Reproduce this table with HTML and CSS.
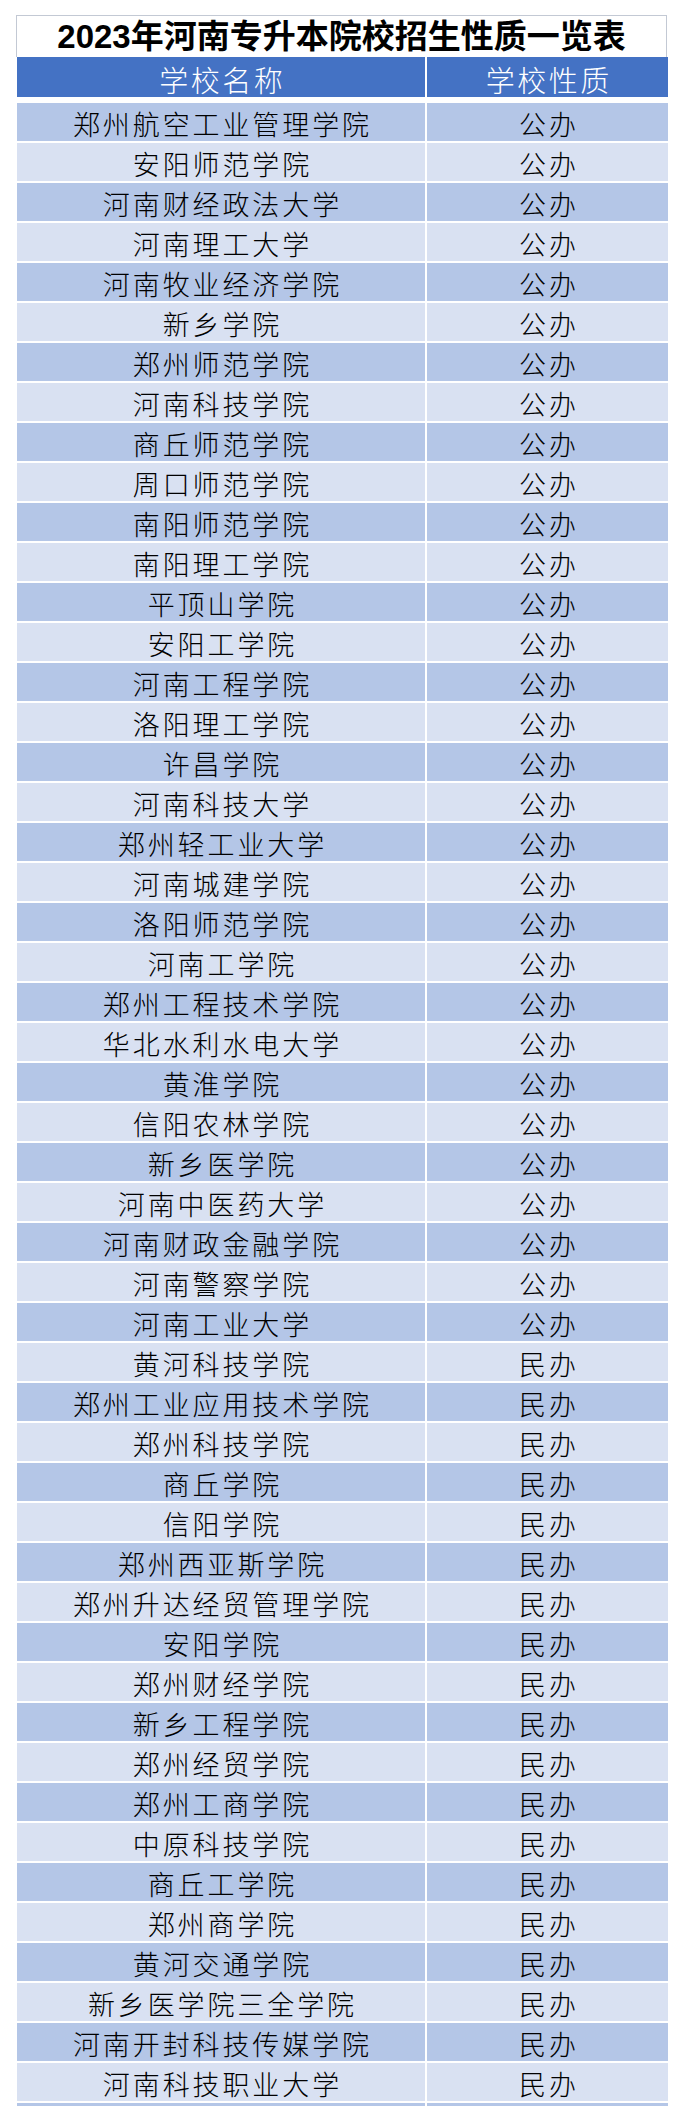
FILE: index.html
```html
<!DOCTYPE html>
<html lang="zh-CN">
<head>
<meta charset="utf-8">
<title>2023年河南专升本院校招生性质一览表</title>
<link rel="stylesheet" href="styles.css">
</head>
<body>
<div class="sheet">
  <div class="title">2023年河南专升本院校招生性质一览表</div>
  <div class="row head"><div class="cell">学校名称</div><div class="cell">学校性质</div></div>
  <div class="rows">
    <div class="row odd"><div class="cell">郑州航空工业管理学院</div><div class="cell">公办</div></div>
    <div class="row even"><div class="cell">安阳师范学院</div><div class="cell">公办</div></div>
    <div class="row odd"><div class="cell">河南财经政法大学</div><div class="cell">公办</div></div>
    <div class="row even"><div class="cell">河南理工大学</div><div class="cell">公办</div></div>
    <div class="row odd"><div class="cell">河南牧业经济学院</div><div class="cell">公办</div></div>
    <div class="row even"><div class="cell">新乡学院</div><div class="cell">公办</div></div>
    <div class="row odd"><div class="cell">郑州师范学院</div><div class="cell">公办</div></div>
    <div class="row even"><div class="cell">河南科技学院</div><div class="cell">公办</div></div>
    <div class="row odd"><div class="cell">商丘师范学院</div><div class="cell">公办</div></div>
    <div class="row even"><div class="cell">周口师范学院</div><div class="cell">公办</div></div>
    <div class="row odd"><div class="cell">南阳师范学院</div><div class="cell">公办</div></div>
    <div class="row even"><div class="cell">南阳理工学院</div><div class="cell">公办</div></div>
    <div class="row odd"><div class="cell">平顶山学院</div><div class="cell">公办</div></div>
    <div class="row even"><div class="cell">安阳工学院</div><div class="cell">公办</div></div>
    <div class="row odd"><div class="cell">河南工程学院</div><div class="cell">公办</div></div>
    <div class="row even"><div class="cell">洛阳理工学院</div><div class="cell">公办</div></div>
    <div class="row odd"><div class="cell">许昌学院</div><div class="cell">公办</div></div>
    <div class="row even"><div class="cell">河南科技大学</div><div class="cell">公办</div></div>
    <div class="row odd"><div class="cell">郑州轻工业大学</div><div class="cell">公办</div></div>
    <div class="row even"><div class="cell">河南城建学院</div><div class="cell">公办</div></div>
    <div class="row odd"><div class="cell">洛阳师范学院</div><div class="cell">公办</div></div>
    <div class="row even"><div class="cell">河南工学院</div><div class="cell">公办</div></div>
    <div class="row odd"><div class="cell">郑州工程技术学院</div><div class="cell">公办</div></div>
    <div class="row even"><div class="cell">华北水利水电大学</div><div class="cell">公办</div></div>
    <div class="row odd"><div class="cell">黄淮学院</div><div class="cell">公办</div></div>
    <div class="row even"><div class="cell">信阳农林学院</div><div class="cell">公办</div></div>
    <div class="row odd"><div class="cell">新乡医学院</div><div class="cell">公办</div></div>
    <div class="row even"><div class="cell">河南中医药大学</div><div class="cell">公办</div></div>
    <div class="row odd"><div class="cell">河南财政金融学院</div><div class="cell">公办</div></div>
    <div class="row even"><div class="cell">河南警察学院</div><div class="cell">公办</div></div>
    <div class="row odd"><div class="cell">河南工业大学</div><div class="cell">公办</div></div>
    <div class="row even"><div class="cell">黄河科技学院</div><div class="cell">民办</div></div>
    <div class="row odd"><div class="cell">郑州工业应用技术学院</div><div class="cell">民办</div></div>
    <div class="row even"><div class="cell">郑州科技学院</div><div class="cell">民办</div></div>
    <div class="row odd"><div class="cell">商丘学院</div><div class="cell">民办</div></div>
    <div class="row even"><div class="cell">信阳学院</div><div class="cell">民办</div></div>
    <div class="row odd"><div class="cell">郑州西亚斯学院</div><div class="cell">民办</div></div>
    <div class="row even"><div class="cell">郑州升达经贸管理学院</div><div class="cell">民办</div></div>
    <div class="row odd"><div class="cell">安阳学院</div><div class="cell">民办</div></div>
    <div class="row even"><div class="cell">郑州财经学院</div><div class="cell">民办</div></div>
    <div class="row odd"><div class="cell">新乡工程学院</div><div class="cell">民办</div></div>
    <div class="row even"><div class="cell">郑州经贸学院</div><div class="cell">民办</div></div>
    <div class="row odd"><div class="cell">郑州工商学院</div><div class="cell">民办</div></div>
    <div class="row even"><div class="cell">中原科技学院</div><div class="cell">民办</div></div>
    <div class="row odd"><div class="cell">商丘工学院</div><div class="cell">民办</div></div>
    <div class="row even"><div class="cell">郑州商学院</div><div class="cell">民办</div></div>
    <div class="row odd"><div class="cell">黄河交通学院</div><div class="cell">民办</div></div>
    <div class="row even"><div class="cell">新乡医学院三全学院</div><div class="cell">民办</div></div>
    <div class="row odd"><div class="cell">河南开封科技传媒学院</div><div class="cell">民办</div></div>
    <div class="row even"><div class="cell">河南科技职业大学</div><div class="cell">民办</div></div>
    <div class="row odd"><div class="cell"></div><div class="cell"></div></div>
  </div>
</div>
</body>
</html>
```

FILE: styles.css
```css
html, body {
  margin: 0;
  padding: 0;
  background: #ffffff;
}

body {
  font-family: "Noto Sans CJK SC", "Liberation Sans", sans-serif;
  color: #000000;
}

.sheet {
  width: 651px;
  margin: 15px 0 0 17px;
}

.title {
  box-sizing: border-box;
  width: 651px;
  height: 42px;
  margin-left: -1px;
  border: 1px solid #c3c9d4;
  border-bottom: none;
  font-family: "Liberation Sans", "Noto Sans CJK SC", sans-serif;
  font-weight: 700;
  font-size: 33px;
  line-height: 41px;
  text-align: center;
  color: #000000;
  white-space: nowrap;
}

.row {
  display: grid;
  grid-template-columns: 408px 241px;
  column-gap: 2px;
}

.rows {
  display: flex;
  flex-direction: column;
  row-gap: 2px;
}

.cell {
  box-sizing: border-box;
  height: 38px;
  padding-top: 3px;
  line-height: 35px;
  text-align: center;
  white-space: nowrap;
  font-size: 27px;
  font-weight: 300;
  letter-spacing: 2.9px;
  text-indent: 2.9px;
}

.head {
  margin-bottom: 6px;
}

.head .cell {
  height: 40px;
  padding-top: 4px;
  line-height: 36px;
  background: #4472c4;
  color: #ffffff;
  font-size: 29px;
  letter-spacing: 2.5px;
  text-indent: 2.5px;
}

.odd .cell {
  background: #b4c6e7;
}

.even .cell {
  background: #d9e1f2;
}
```
